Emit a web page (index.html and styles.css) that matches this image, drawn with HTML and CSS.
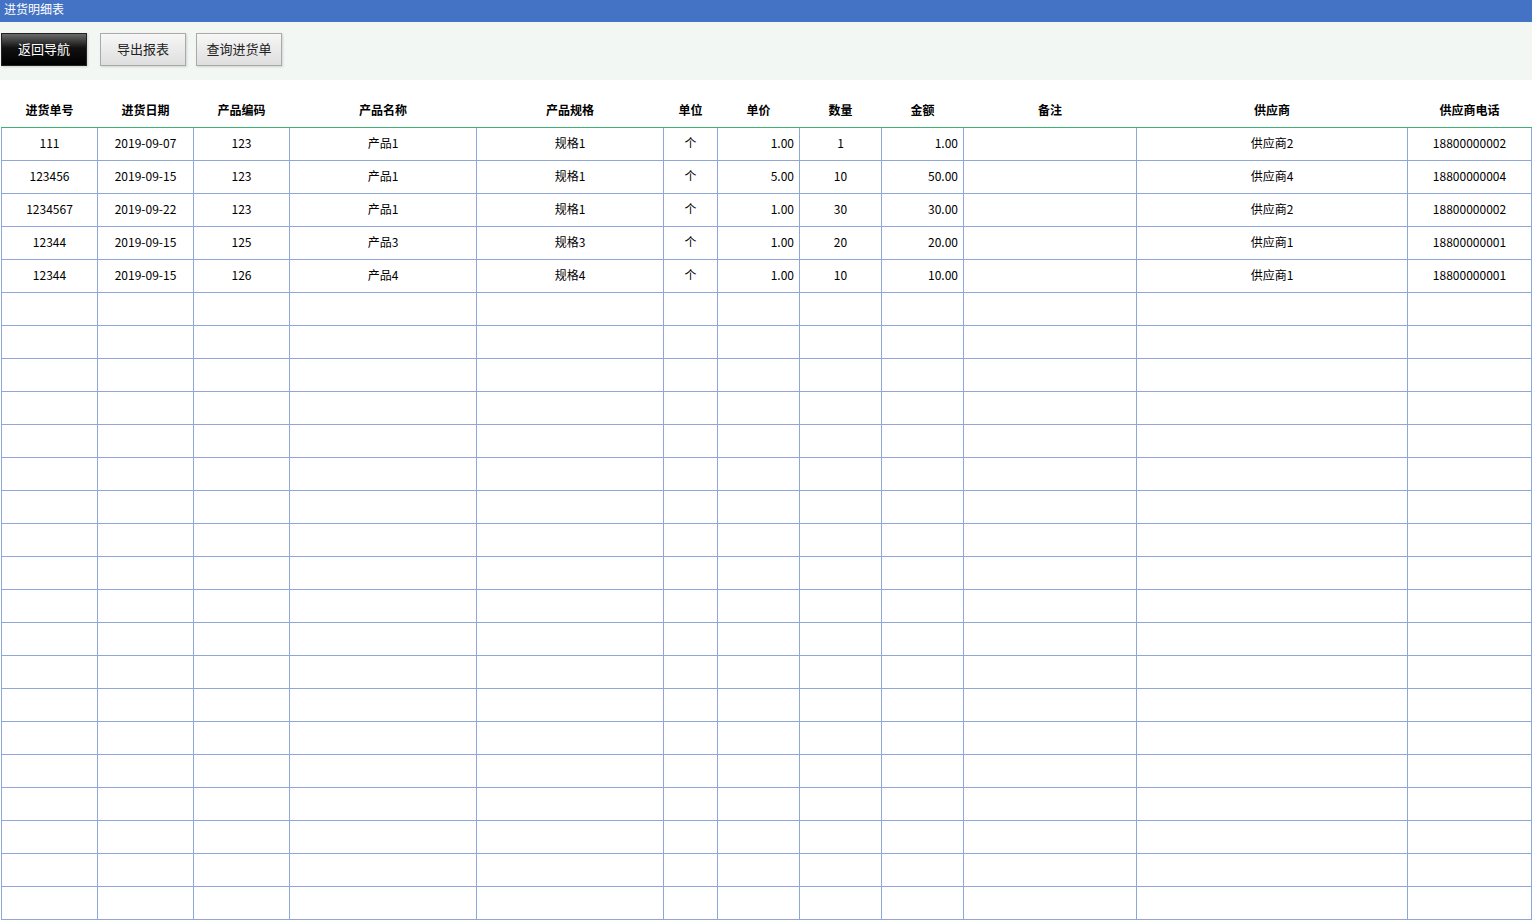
FILE: index.html
```html
<!DOCTYPE html>
<html lang="zh-CN">

<head>
    <meta charset="utf-8">
    <title>进货明细表</title>
    <link rel="stylesheet" href="styles.css">
</head>

<body>
    <div class="title-bar">进货明细表</div>

    <div class="toolbar">
        <button class="btn btn-dark">返回导航</button>
        <button class="btn">导出报表</button>
        <button class="btn">查询进货单</button>
    </div>

    <table class="grid" id="detailTable">
        <colgroup>
            <col style="width:96px">
            <col style="width:96px">
            <col style="width:96px">
            <col style="width:187px">
            <col style="width:187px">
            <col style="width:54px">
            <col style="width:82px">
            <col style="width:82px">
            <col style="width:82px">
            <col style="width:173px">
            <col style="width:271px">
            <col style="width:124px">
        </colgroup>
        <thead>
            <tr>
                <th>进货单号</th>
                <th>进货日期</th>
                <th>产品编码</th>
                <th>产品名称</th>
                <th>产品规格</th>
                <th>单位</th>
                <th>单价</th>
                <th>数量</th>
                <th>金额</th>
                <th>备注</th>
                <th>供应商</th>
                <th>供应商电话</th>
            </tr>
        </thead>
        <tbody id="rows"></tbody>
    </table>

    <script>
        var data = [
            ["111", "2019-09-07", "123", "产品1", "规格1", "个", "1.00", "1", "1.00", "", "供应商2", "18800000002"],
            ["123456", "2019-09-15", "123", "产品1", "规格1", "个", "5.00", "10", "50.00", "", "供应商4", "18800000004"],
            ["1234567", "2019-09-22", "123", "产品1", "规格1", "个", "1.00", "30", "30.00", "", "供应商2", "18800000002"],
            ["12344", "2019-09-15", "125", "产品3", "规格3", "个", "1.00", "20", "20.00", "", "供应商1", "18800000001"],
            ["12344", "2019-09-15", "126", "产品4", "规格4", "个", "1.00", "10", "10.00", "", "供应商1", "18800000001"]
        ];

        var body = document.getElementById("rows");
        // fill up the grid with empty rows so it looks like a sheet
        for (var i = 0; i < 24; i++) {
            var tr = document.createElement("tr");
            for (var j = 0; j < 12; j++) {
                var td = document.createElement("td");
                if (j == 6 || j == 8) td.className = "num";
                td.textContent = data[i] ? data[i][j] : "";
                tr.appendChild(td);
            }
            body.appendChild(tr);
        }
    </script>
</body>

</html>
```

FILE: styles.css
```css
body {
    margin: 0;
    padding: 0;
    font-family: "Noto Sans CJK SC", "Liberation Sans", sans-serif;
    font-size: 12px;
    color: #000;
    background-color: white;
    overflow: hidden;
}

.title-bar {
    height: 22px;
    line-height: 17px;
    padding-left: 4px;
    background-color: #4472c4;
    color: white;
    font-size: 12px;
}

.toolbar {
    height: 58px;
    background-color: #f3f7f4;
    padding: 11px 0 0 1px;
    box-sizing: border-box;
    display: flex;
    gap: 10px;
    align-items: flex-start;
}

.btn {
    width: 86px;
    height: 33px;
    margin: 0;
    padding: 0 0 2px 0;
    font-family: inherit;
    font-size: 13px;
    color: #222;
    border: 1px solid #a9a9a9;
    background: linear-gradient(#f7f7f7, #dedede);
    box-shadow: 1px 1px 2px rgba(0, 0, 0, 0.15);
    cursor: pointer;
}

.btn-dark {
    margin-right: 3px;
    color: white;
    border: 1px solid #222;
    background: linear-gradient(#6a6a6a 0%, #111 45%, #000 100%);
}

.grid {
    margin-top: 15px;
    margin-left: 1px;
    border-collapse: collapse;
    table-layout: fixed;
    width: 1530px;
}

.grid th {
    height: 32px;
    padding: 0 0 3px 0;
    box-sizing: border-box;
    font-weight: bold;
    font-size: 12px;
    text-align: center;
    border-bottom: 1px solid #3cb371;
}

.grid td {
    height: 29px;
    padding: 0 5px 3px 5px;
    text-align: center;
    border: 1px solid #8ea6da;
    white-space: nowrap;
    overflow: hidden;
}

.grid td.num {
    text-align: right;
}
```
